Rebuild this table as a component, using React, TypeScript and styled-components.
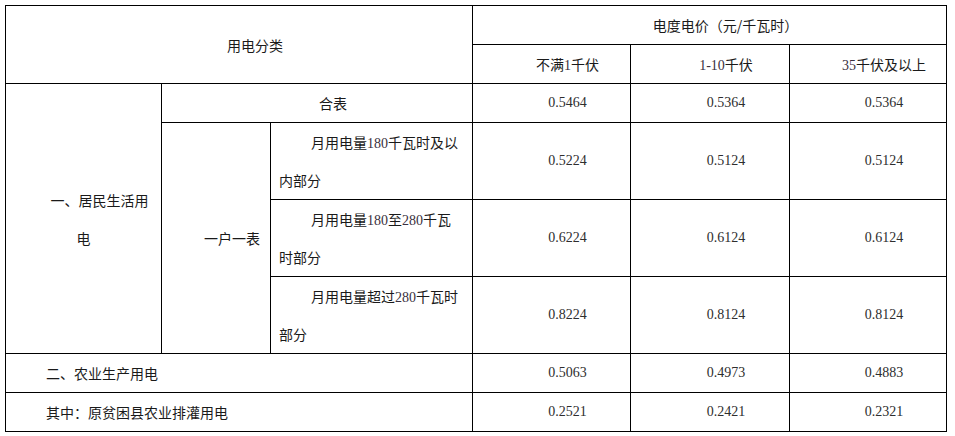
import React from 'react';
import styled, { createGlobalStyle } from 'styled-components';

const GlobalStyle = createGlobalStyle`
  html, body {
    margin: 0;
    padding: 0;
    background: #fff;
  }
`

const Page = styled.div`
  padding: 5px;
  width: 955px;
  height: 436px;
  box-sizing: border-box;
  background: #fff;
`

const Table = styled.table`
  width: 941px;
  table-layout: fixed;
  border-collapse: collapse;
  font-family: "Noto Sans CJK SC", "Noto Sans", sans-serif;
  font-size: 14px;
  color: #1a1a1a;
`

const Cell = styled.td<{ $left?: boolean }>`
  border: 1px solid #000;
  padding: 0 8px;
  height: 38px;
  line-height: 38px;
  text-align: ${props => (props.$left ? 'left' : 'center')};
  text-indent: 32px;
  vertical-align: middle;
  word-break: break-all;
`

// digits inside chinese text use the serif face; line-height 1 keeps the line box at 38px
const Num = styled.span`
  font-family: "Liberation Serif", "Times New Roman", serif;
  line-height: 1;
  color: #3a3040;
`

const NumCell = styled(Cell)`
  font-family: "Liberation Serif", "Times New Roman", serif;
  color: #2e2e2e;
`

type PriceRow = [string, string, string]

const Prices = ({ values }: { values: PriceRow }) => (
  <>
    {values.map((v, i) => (
      <NumCell key={i}>{v}</NumCell>
    ))}
  </>
)

const App = () => {
  return (
    <Page>
      <GlobalStyle />
      <Table>
        <colgroup>
          <col style={{ width: 156 }} />
          <col style={{ width: 109 }} />
          <col style={{ width: 202 }} />
          <col style={{ width: 158 }} />
          <col style={{ width: 159 }} />
          <col style={{ width: 157 }} />
        </colgroup>
        <tbody>
          <tr>
            <Cell colSpan={3} rowSpan={2}>用电分类</Cell>
            <Cell colSpan={3}>电度电价（元/千瓦时）</Cell>
          </tr>
          <tr>
            <Cell>不满<Num>1</Num>千伏</Cell>
            <Cell><Num>1-10</Num>千伏</Cell>
            <Cell><Num>35</Num>千伏及以上</Cell>
          </tr>
          <tr>
            <Cell rowSpan={4}>一、居民生活用电</Cell>
            <Cell colSpan={2}>合表</Cell>
            <Prices values={['0.5464', '0.5364', '0.5364']} />
          </tr>
          <tr>
            <Cell rowSpan={3}>一户一表</Cell>
            <Cell $left>月用电量<Num>180</Num>千瓦时及以内部分</Cell>
            <Prices values={['0.5224', '0.5124', '0.5124']} />
          </tr>
          <tr>
            <Cell $left>月用电量<Num>180</Num>至<Num>280</Num>千瓦时部分</Cell>
            <Prices values={['0.6224', '0.6124', '0.6124']} />
          </tr>
          <tr>
            <Cell $left>月用电量超过<Num>280</Num>千瓦时部分</Cell>
            <Prices values={['0.8224', '0.8124', '0.8124']} />
          </tr>
          <tr>
            <Cell colSpan={3} $left>二、农业生产用电</Cell>
            <Prices values={['0.5063', '0.4973', '0.4883']} />
          </tr>
          <tr>
            <Cell colSpan={3} $left>其中：原贫困县农业排灌用电</Cell>
            <Prices values={['0.2521', '0.2421', '0.2321']} />
          </tr>
        </tbody>
      </Table>
    </Page>
  )
}

export default App;
